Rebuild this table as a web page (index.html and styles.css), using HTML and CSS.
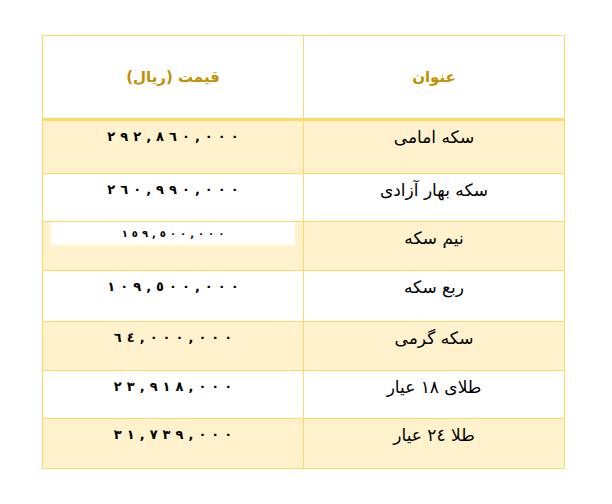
FILE: index.html
```html
<!DOCTYPE html>
<html lang="fa">
<head>
<meta charset="utf-8">
<title>قیمت سکه و طلا</title>
<link rel="stylesheet" href="styles.css">
</head>
<body>
<table class="prices" dir="rtl">
  <thead>
    <tr class="head">
      <th>عنوان</th>
      <th>قیمت (ریال)</th>
    </tr>
  </thead>
  <tbody>
    <tr class="row shade r1"><td class="name">سکه امامی</td><td class="num"><span class="digits"><span>٢</span><span>٩</span><span>٢</span><span>,</span><span>٨</span><span>٦</span><span>٠</span><span>,</span><span>٠</span><span>٠</span><span>٠</span></span></td></tr>
    <tr class="row r2"><td class="name">سکه بهار  آزادی</td><td class="num"><span class="digits"><span>٢</span><span>٦</span><span>٠</span><span>,</span><span>٩</span><span>٩</span><span>٠</span><span>,</span><span>٠</span><span>٠</span><span>٠</span></span></td></tr>
    <tr class="row shade r3"><td class="name">نیم سکه</td><td class="num boxed"><div class="box"><span class="digits small"><span>١</span><span>٥</span><span>٩</span><span>,</span><span>٥</span><span>٠</span><span>٠</span><span>,</span><span>٠</span><span>٠</span><span>٠</span></span></div></td></tr>
    <tr class="row r4"><td class="name">ربع سکه</td><td class="num"><span class="digits"><span>١</span><span>٠</span><span>٩</span><span>,</span><span>٥</span><span>٠</span><span>٠</span><span>,</span><span>٠</span><span>٠</span><span>٠</span></span></td></tr>
    <tr class="row shade r5"><td class="name">سکه گرمی</td><td class="num"><span class="digits"><span>٦</span><span>٤</span><span>,</span><span>٠</span><span>٠</span><span>٠</span><span>,</span><span>٠</span><span>٠</span><span>٠</span></span></td></tr>
    <tr class="row r6"><td class="name">طلای ١٨ عیار</td><td class="num"><span class="digits"><span>٢</span><span>٣</span><span>,</span><span>٩</span><span>١</span><span>٨</span><span>,</span><span>٠</span><span>٠</span><span>٠</span></span></td></tr>
    <tr class="row shade r7"><td class="name">طلا ٢٤ عیار</td><td class="num"><span class="digits"><span>٣</span><span>١</span><span>,</span><span>٧</span><span>٣</span><span>٩</span><span>,</span><span>٠</span><span>٠</span><span>٠</span></span></td></tr>
  </tbody>
</table>
</body>
</html>
```
FILE: styles.css
```css
html, body {
  margin: 0;
  padding: 0;
  background: #ffffff;
}
body {
  padding: 35px 0 0 42px;
  font-family: "DejaVu Sans", "Liberation Serif", serif;
}
.prices {
  border-collapse: collapse;
  width: 523px;
  table-layout: fixed;
}
.prices th,
.prices td {
  border: 1px solid #ffd966;
  width: 50%;
  text-align: center;
  padding: 0;
  box-sizing: border-box;
}
.head th {
  height: 84px;
  color: #bf9000;
  font-size: 15px;
  font-weight: bold;
  vertical-align: middle;
  border-bottom: 3px solid #ffd966;
}
.row td {
  vertical-align: top;
}
.shade td {
  background: #fff2cc;
}
.name {
  font-size: 17px;
  color: #000;
  line-height: 20px;
  padding-top: 6px !important;
}
.num {
  font-size: 13px;
  font-weight: bold;
  color: #000;
  line-height: 16px;
  padding-top: 8px !important;
}
.digits {
  display: inline-flex;
  direction: ltr;
  gap: 5px;
}
.num.boxed {
  padding: 0 8px !important;
}
.box {
  background: #ffffff;
  height: 23px;
  padding-top: 3px;
  box-sizing: border-box;
}
.digits.small {
  font-size: 10px;
  line-height: 12px;
  gap: 4px;
}
.r1 td { height: 54px; }
.r2 td { height: 48px; }
.r3 td { height: 49px; }
.r4 td { height: 51px; }
.r5 td { height: 49px; }
.r6 td { height: 48px; }
.r7 td { height: 50px; }
```
